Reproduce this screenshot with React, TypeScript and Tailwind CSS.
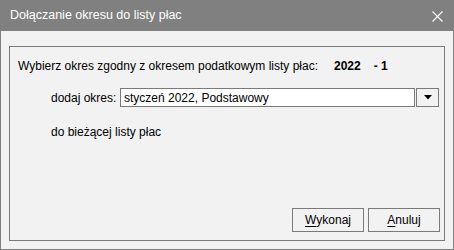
import React from "react";

const font = { fontFamily: '"Liberation Sans", Arial, sans-serif' };

function DialogButton({ hot, rest }: { hot: string; rest: string }) {
  return (
    <button className="flex h-[24px] w-[72px] items-center justify-center border border-[#7a7a7a] bg-[#f2f2f2] text-[12px] text-black">
      <span className="underline underline-offset-2">{hot}</span>
      {rest}
    </button>
  );
}

export default function App() {
  return (
    <div
      className="flex h-[250px] w-[454px] flex-col border border-t-0 border-[#808080] bg-[#f2f2f2] text-black"
      style={font}
    >
      <div className="flex h-[31px] shrink-0 items-center justify-between bg-[#808080] pl-[9px] pr-[10px] text-[12.5px] text-white">
        <span>Dołączanie okresu do listy płac</span>
        <svg width="11" height="11" viewBox="0 0 11 11" className="mt-[1px]">
          <path d="M0.5 0.5 L10.5 10.5 M10.5 0.5 L0.5 10.5" stroke="white" strokeWidth="1.1" />
        </svg>
      </div>
      <div className="flex flex-1 px-[8px] pb-[8px] pt-[15px]">
        <div className="flex flex-1 flex-col border border-[#7a7a7a] pl-[8px] pr-[4px] pb-[8px]">
          <div className="mt-[11px] flex h-[16px] items-center whitespace-nowrap text-[12px]">
            <span>Wybierz okres zgodny z okresem podatkowym listy płac:</span>
            <span className="ml-[16px] font-bold">2022</span>
            <span className="ml-[13px] font-bold">- 1</span>
          </div>
          <div className="mt-[14px] flex items-center whitespace-nowrap pl-[33px] text-[12px]">
            <span className="w-[69px]">dodaj okres:</span>
            <div className="flex h-[19px] w-[295px] items-center border border-[#7a7a7a] bg-white pl-[3px]">
              styczeń 2022, Podstawowy
            </div>
            <div className="ml-[1px] flex h-[19px] w-[23px] items-center justify-center border border-[#7a7a7a] bg-[#f2f2f2]">
              <svg width="8" height="5" viewBox="0 0 8 5">
                <path d="M0 0 H8 L4 4.5 Z" fill="black" />
              </svg>
            </div>
          </div>
          <div className="mt-[16px] whitespace-nowrap pl-[33px] text-[12px]">do bieżącej listy płac</div>
          <div className="mt-auto flex justify-end gap-[4px]">
            <DialogButton hot="W" rest="ykonaj" />
            <DialogButton hot="A" rest="nuluj" />
          </div>
        </div>
      </div>
    </div>
  );
}
